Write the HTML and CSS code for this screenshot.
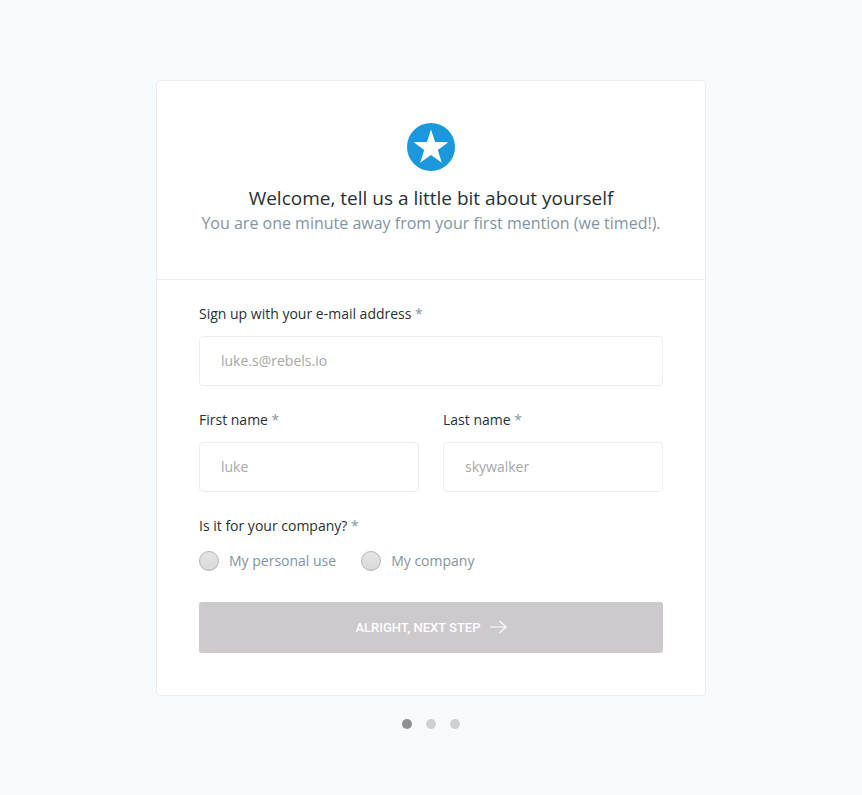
FILE: index.html
```html
<!DOCTYPE html>
<html lang="en">
<head>
    <meta charset="UTF-8">
    <meta name="viewport" content="width=device-width, initial-scale=1.0">
    <title>Sign up</title>
    <link rel="stylesheet" href="styles.css">
</head>
<body>
    <main class="signup">
        <div class="card">
            <header class="card-header">
                <svg class="logo" viewBox="0 0 48 48" aria-hidden="true">
                    <circle cx="24" cy="24" r="24" fill="#1a98db"/>
                    <path fill="#fff" d="M24 6.500l4.100 12.600 13.200.1-10.500 7.900 4 12.600L24 32.100l-10.800 7.600 4-12.600L6.700 19.200l13.200-.1z"/>
                </svg>
                <h1>Welcome, tell us a little bit about yourself</h1>
                <p class="subtitle">You are one minute away from your first mention (we timed!).</p>
            </header>

            <form class="card-body">
                <div class="input-group">
                    <label for="email">Sign up with your e-mail address <span class="required">*</span></label>
                    <input type="email" id="email" class="text-input" placeholder="luke.s@rebels.io">
                </div>

                <div class="input-row">
                    <div class="input-group">
                        <label for="firstName">First name <span class="required">*</span></label>
                        <input type="text" id="firstName" class="text-input" placeholder="luke">
                    </div>
                    <div class="input-group">
                        <label for="lastName">Last name <span class="required">*</span></label>
                        <input type="text" id="lastName" class="text-input" placeholder="skywalker">
                    </div>
                </div>

                <fieldset class="usage">
                    <legend>Is it for your company? <span class="required">*</span></legend>
                    <div class="options">
                        <label class="option"><input type="radio" name="usage" value="personal">My personal use</label>
                        <label class="option"><input type="radio" name="usage" value="company">My company</label>
                    </div>
                </fieldset>

                <button type="button" class="next">
                    ALRIGHT, NEXT STEP
                    <svg class="arrow" viewBox="0 0 18 14" aria-hidden="true">
                        <path d="M1 7h16M10.500 1L17 7l-6.500 6" fill="none" stroke="#fff" stroke-width="1.200"/>
                    </svg>
                </button>
            </form>
        </div>

        <div class="steps">
            <span class="dot active"></span>
            <span class="dot"></span>
            <span class="dot"></span>
        </div>
    </main>
</body>
</html>
```

FILE: styles.css
```css
:root {
    --bg-color: #f8fbfd;
    --text-color: #293135;
    --muted-color: #84949f;
    --border-color: #ebedef;
}

* {
    margin: 0;
    padding: 0;
    box-sizing: border-box;
}

body {
    background: var(--bg-color);
    color: var(--text-color);
    font-family: "Open Sans", sans-serif;
    font-size: 14px;
    line-height: 20px;
    padding: 80px 20px 24px;
}

.signup {
    max-width: 550px;
    margin: 0 auto;
}

.card {
    background: #fff;
    border: 1px solid var(--border-color);
    border-radius: 4px;
}

.card-header {
    padding: 42px 20px 44px;
    text-align: center;
    border-bottom: 1px solid var(--border-color);
}

.logo {
    display: block;
    width: 48px;
    height: 48px;
    margin: 0 auto 14px;
}

h1 {
    font-size: 19px;
    font-weight: 400;
    line-height: 26px;
}

.subtitle {
    color: var(--muted-color);
    font-size: 16px;
    line-height: 24px;
}

.card-body {
    padding: 24px 42px 42px;
}

.input-row {
    display: grid;
    grid-template-columns: 1fr 1fr;
    gap: 24px;
}

.input-group {
    margin-bottom: 24px;
}

.input-group label {
    display: block;
    margin-bottom: 12px;
}

.required {
    color: var(--muted-color);
}

.text-input {
    display: block;
    width: 100%;
    height: 50px;
    padding: 0 21px 2px;
    border: 1px solid var(--border-color);
    border-radius: 4px;
    background: #fff;
    color: var(--text-color);
    font: inherit;
}

.text-input::placeholder {
    color: #a9a7a9;
}

.usage {
    border: none;
    margin-bottom: 31px;
}

.options {
    display: flex;
    gap: 25px;
    margin-top: 15px;
}

.option {
    display: flex;
    align-items: center;
    gap: 10px;
    color: var(--muted-color);
}

.option input {
    appearance: none;
    width: 20px;
    height: 20px;
    border: 1px solid #b5b2b6;
    border-radius: 50%;
    background: linear-gradient(#e6e4e6, #dad8da);
}

.option input:checked {
    border: 6px solid #1a98db;
    background: #fff;
}

.next {
    display: flex;
    align-items: center;
    justify-content: center;
    gap: 8px;
    width: 100%;
    height: 51px;
    padding-bottom: 1px;
    border: none;
    border-radius: 3px;
    background: #cdc9cd;
    color: #fff;
    font-family: Roboto, sans-serif;
    font-size: 13px;
    font-weight: 500;
    cursor: pointer;
}

.arrow {
    width: 18px;
    height: 14px;
}

.steps {
    display: flex;
    justify-content: center;
    gap: 14px;
    margin-top: 23px;
}

.dot {
    width: 10px;
    height: 10px;
    border-radius: 50%;
    background: #cfd0d1;
}

.dot.active {
    background: #8e8f91;
}
```
